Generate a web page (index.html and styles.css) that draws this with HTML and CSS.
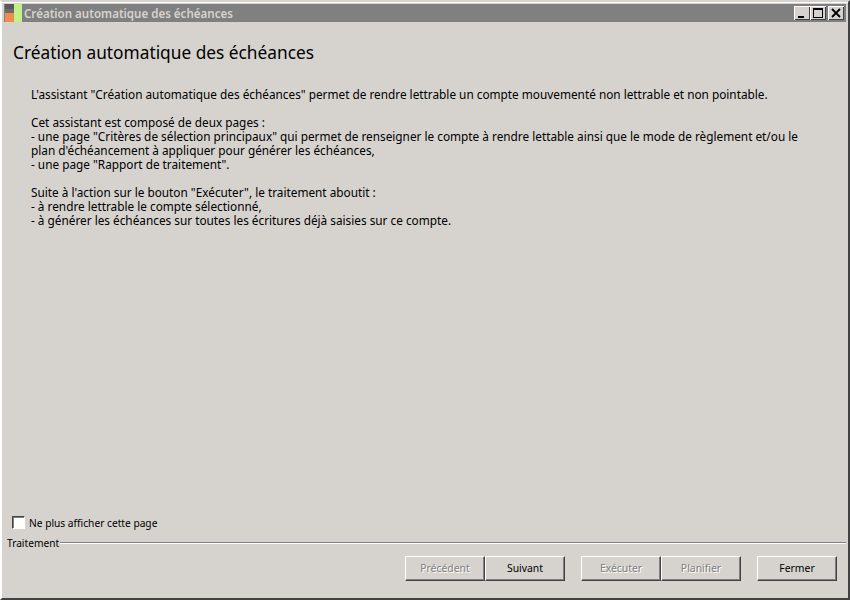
FILE: index.html
```html
<!DOCTYPE html>
<html lang="fr">
<head>
<meta charset="utf-8">
<title>Création automatique des échéances</title>
<link rel="stylesheet" href="styles.css">
</head>
<body>
<div class="window">
  <header class="titlebar">
    <svg class="appicon" width="17" height="18" viewBox="0 0 17 18" aria-hidden="true">
      <rect x="0" y="0" width="9" height="5" fill="#5a5a5a"/>
      <rect x="0" y="5" width="9" height="4" fill="#6e6a64"/>
      <rect x="0" y="9" width="9" height="9" fill="#f08a4e"/>
      <rect x="9" y="0" width="8" height="18" fill="#c4f08c"/>
    </svg>
    <span class="title">Création automatique des échéances</span>
    <div class="controls">
      <button class="ctl" aria-label="Réduire"><svg width="16" height="14" viewBox="0 0 16 14"><rect x="4" y="10" width="6" height="2" fill="#000"/></svg></button>
      <button class="ctl" aria-label="Agrandir"><svg width="16" height="14" viewBox="0 0 16 14"><path d="M3 2h10v10H3z M4 4v7h8V4z" fill="#000" fill-rule="evenodd"/></svg></button>
      <button class="ctl close" aria-label="Fermer"><svg width="16" height="14" viewBox="0 0 16 14"><path d="M4 3l8 8M12 3l-8 8" stroke="#000" stroke-width="1.8" fill="none"/></svg></button>
    </div>
  </header>
  <main class="content">
    <h1 class="heading">Création automatique des échéances</h1>
    <div class="text">
      <p>L'assistant "Création automatique des échéances" permet de rendre lettrable un compte mouvementé non lettrable et non pointable.</p>
      <p>Cet assistant est composé de deux pages :<br>
      - une page "Critères de sélection principaux" qui permet de renseigner le compte à rendre lettable ainsi que le mode de règlement et/ou le<br>
      plan d'échéancement à appliquer pour générer les échéances,<br>
      - une page "Rapport de traitement".</p>
      <p>Suite à l'action sur le bouton "Exécuter", le traitement aboutit :<br>
      - à rendre lettrable le compte sélectionné,<br>
      - à générer les échéances sur toutes les écritures déjà saisies sur ce compte.</p>
    </div>
    <label class="check"><span class="box"></span><span class="check-text">Ne plus afficher cette page</span></label>
    <div class="group"><span class="group-label">Traitement</span><span class="group-line"></span></div>
    <div class="actions">
      <div class="btn-set">
        <button class="btn" disabled>Précédent</button>
        <button class="btn">Suivant</button>
      </div>
      <div class="btn-set">
        <button class="btn" disabled>Exécuter</button>
        <button class="btn" disabled>Planifier</button>
      </div>
      <button class="btn">Fermer</button>
    </div>
  </main>
</div>
</body>
</html>
```
FILE: styles.css
```css
* { box-sizing: border-box; }
html, body { margin: 0; height: 100%; }
body {
  background: #d6d3ce;
  font-family: "Noto Sans", sans-serif;
  font-size: 11.8px;
  color: #000;
  overflow: hidden;
}
.window {
  width: 850px;
  height: 600px;
  background: #d6d3ce;
  border-top: 2px solid #d6d3ce;
  border-left: 2px solid #fff;
  border-right: 2px solid #424242;
  border-bottom: 2px solid #424242;
  padding: 2px;
  display: flex;
  flex-direction: column;
  box-shadow: inset 0 1px 0 #fff;
}
.titlebar {
  height: 18px;
  background: #808080;
  display: flex;
  align-items: center;
  flex: none;
}
.appicon { flex: none; margin-left: 1px; }
.title {
  margin-left: 2px;
  color: #d6d3ce;
  font-size: 11.55px;
  font-weight: 600;
}
.controls { margin-left: auto; display: flex; margin-right: 2px; }
.ctl {
  width: 16px;
  height: 14px;
  padding: 0;
  background: #d6d3ce;
  border: none;
  box-shadow: inset 1px 1px 0 #fff, inset -1px -1px 0 #424242;
  display: block;
}
.ctl svg { display: block; }
.close { margin-left: 2px; }
.content {
  flex: 1;
  display: flex;
  flex-direction: column;
  padding: 0 0 15px;
  min-height: 0;
}
.heading {
  margin: 19px 0 0 9px;
  font-size: 17.3px;
  line-height: 24px;
  font-weight: 400;
}
.text {
  margin: 22px 40px 0 27px;
  line-height: 14px;
  flex: 1;
}
.text p { margin: 0 0 14px; white-space: nowrap; }
.check { display: flex; align-items: center; margin: 0 0 0 8px; height: 14px; font-size: 10.2px; }
.check-text { margin-top: 2px; }
.box {
  width: 13px;
  height: 13px;
  background: #fff;
  margin-right: 4px;
  border: 1px solid #424242;
  border-right-color: #fff;
  border-bottom-color: #fff;
  box-shadow: inset 1px 1px 0 #808080;
}
.group { display: flex; align-items: center; height: 14px; margin: 7px 0 0 3px; font-size: 10.2px; }
.group-line { flex: 1; height: 2px; border-top: 1px solid #808080; border-bottom: 1px solid #fff; margin-left: 1px; }
.actions { display: flex; justify-content: flex-end; gap: 16px; margin: 6px 9px 0 0; }
.btn-set { display: flex; }
.btn {
  width: 80px;
  height: 25px;
  padding: 0 0 1px;
  background: #d6d3ce;
  border: 1px solid;
  border-color: #fff #424242 #424242 #fff;
  box-shadow: inset -1px -1px 0 #808080;
  font: inherit;
  font-size: 10.4px;
  color: #000;
}
.btn:disabled { color: #808080; text-shadow: 1px 1px 0 #fff; }
```
